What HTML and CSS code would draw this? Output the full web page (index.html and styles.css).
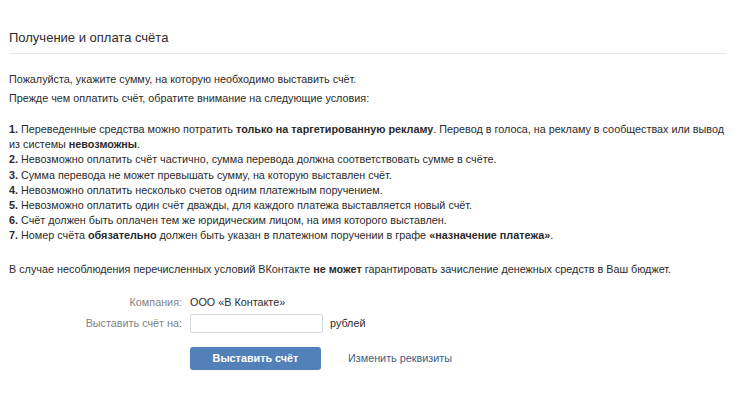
FILE: index.html
```html
<!DOCTYPE html>
<html>
<head>
<meta charset="utf-8">
<meta name="viewport" content="width=device-width, initial-scale=1">
<link rel="stylesheet" href="styles.css">
</head>
<body>
    <div class="page">
        <div class="pageTitle">Получение и оплата счёта</div>

        <div class="intro">
            Пожалуйста, укажите сумму, на которую необходимо выставить счёт.<br>
            Прежде чем оплатить счёт, обратите внимание на следующие условия:
        </div>

        <div class="rules">
            <b>1.</b> Переведенные средства можно потратить <b>только на таргетированную рекламу</b>. Перевод в голоса, на рекламу в сообществах или вывод из системы <b>невозможны</b>.<br>
            <b>2.</b> Невозможно оплатить счёт частично, сумма перевода должна соответствовать сумме в счёте.<br>
            <b>3.</b> Сумма перевода не может превышать сумму, на которую выставлен счёт.<br>
            <b>4.</b> Невозможно оплатить несколько счетов одним платежным поручением.<br>
            <b>5.</b> Невозможно оплатить один счёт дважды, для каждого платежа выставляется новый счёт.<br>
            <b>6.</b> Счёт должен быть оплачен тем же юридическим лицом, на имя которого выставлен.<br>
            <b>7.</b> Номер счёта <b>обязательно</b> должен быть указан в платежном поручении в графе <b>«назначение платежа»</b>.
        </div>

        <div class="warning">
            В случае несоблюдения перечисленных условий ВКонтакте <b>не может</b> гарантировать зачисление денежных средств в Ваш бюджет.
        </div>

        <div class="form">
            <div class="formRow">
                <div class="formLabel">Компания:</div>
                <div class="formValue">ООО «В Контакте»</div>
            </div>
            <div class="formRow">
                <div class="formLabel">Выставить счёт на:</div>
                <input type="text" class="formInput">
                <span class="formUnit">рублей</span>
            </div>
            <div class="formRow formButtons">
                <div class="formLabel"></div>
                <a href="#" class="button">Выставить счёт</a>
                <a href="#" class="link">Изменить реквизиты</a>
            </div>
        </div>
    </div>
</body>
</html>
```

FILE: styles.css
```css
html {
    margin: 0px;
}

body {
    margin: 0px;
    background: #FFFFFF;
    font-family: "Liberation Sans", Arial, Helvetica, sans-serif;
    font-size: 10.8px;
    color: #2B2B2B;
}

.page {
    width: 718px;
    padding: 30px 0px 0px 9px;
}

.pageTitle {
    font-size: 13px;
    color: #2B2B2B;
    padding-bottom: 8px;
    border-bottom: 1px solid #E7E8EC;
}

.intro {
    margin-top: 16px;
    line-height: 19px;
}

.rules {
    margin-top: 14px;
    line-height: 15.2px;
}

.warning {
    margin-top: 18px;
    line-height: 15px;
}

.form {
    margin-top: 19px;
}

.formRow {
    display: flex;
    align-items: center;
    margin-bottom: 6px;
}

.formLabel {
    width: 173px;
    text-align: right;
    padding-right: 8px;
    color: #828282;
}

.formValue {
    color: #2B2B2B;
}

.formInput {
    width: 133px;
    height: 19px;
    box-sizing: border-box;
    border: 1px solid #D3D9DE;
    border-radius: 2px;
    margin: 0px;
    padding: 2px 5px;
    font-family: inherit;
    font-size: 11px;
}

.formUnit {
    margin-left: 7px;
}

.formButtons {
    margin-top: 14px;
}

.button {
    display: inline-block;
    width: 131px;
    height: 23px;
    line-height: 23px;
    text-align: center;
    background: #5181B8;
    color: #FFFFFF;
    border-radius: 3px;
    text-decoration: none;
    font-weight: bold;
}

.link {
    margin-left: 27px;
    color: #3D5F85;
    text-decoration: none;
}
```
